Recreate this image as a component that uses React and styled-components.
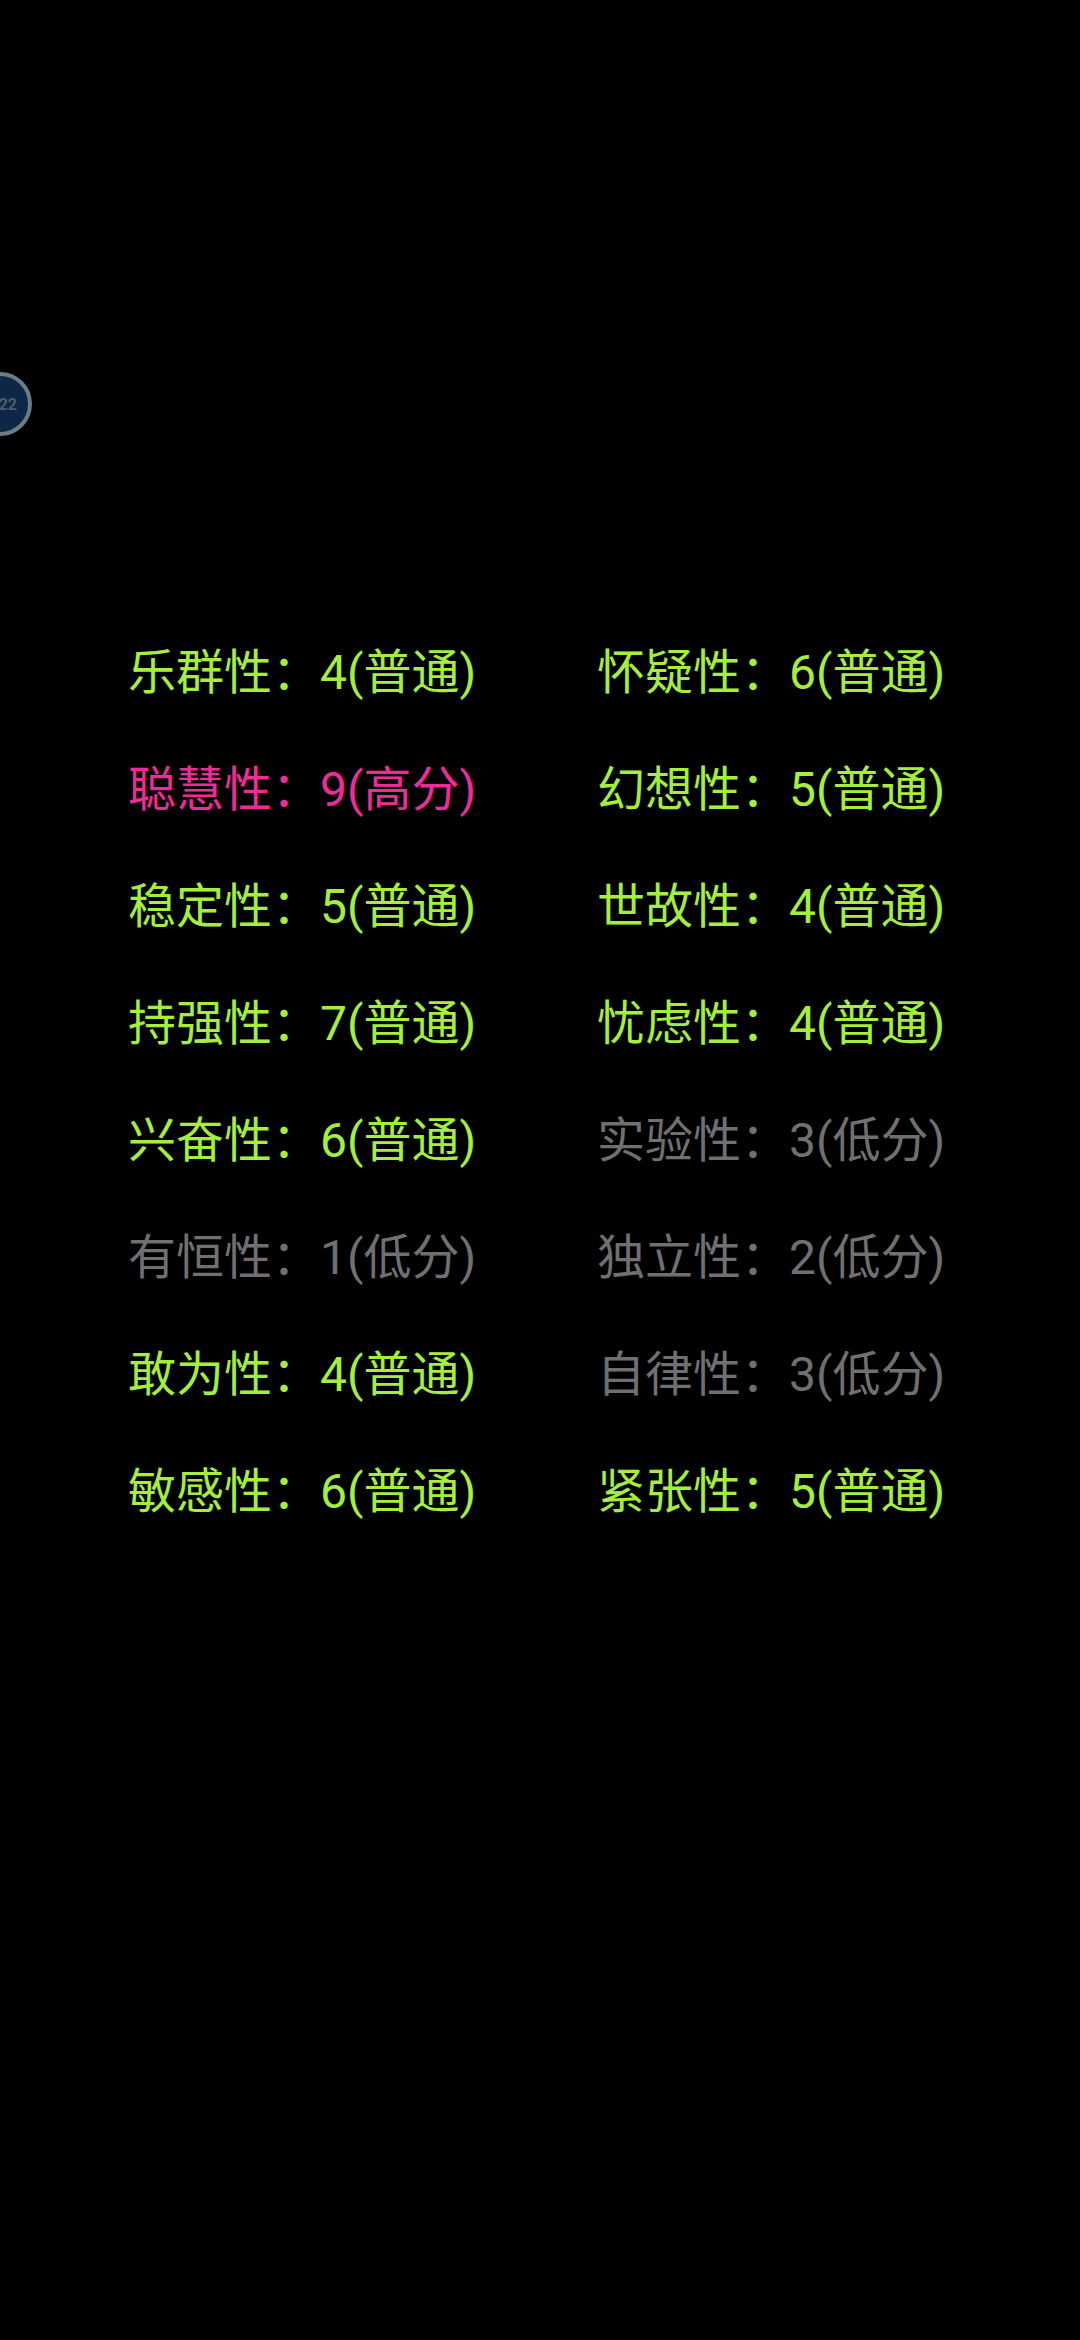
import React from 'react';
import styled, { createGlobalStyle } from 'styled-components';

const GlobalStyle = createGlobalStyle`
  html, body {
    margin: 0;
    padding: 0;
    background: #000;
  }
`;

const Screen = styled.div`
  position: relative;
  width: 1080px;
  height: 2340px;
  overflow: hidden;
  background: #000;
  font-family: Roboto, "Noto Sans CJK SC", sans-serif;
`;

const FloatBall = styled.div`
  position: absolute;
  left: -32px;
  top: 372px;
  width: 64px;
  height: 64px;
  box-sizing: border-box;
  border: 4px solid #6f7b82;
  border-radius: 50%;
  background: #0e2747;
  display: flex;
  align-items: center;
  justify-content: flex-end;
  padding-right: 11px;
  color: #4b5c70;
  font-size: 16px;
  font-weight: 700;
`;

const Grid = styled.div`
  display: grid;
  grid-template-columns: 469px 1fr;
  grid-auto-rows: 117px;
  padding: 609px 0 0 128px;
`;

const levelColor = {
  normal: '#a4ee3c',
  high: '#f02a98',
  low: '#707070',
};

const Trait = styled.div`
  display: flex;
  align-items: center;
  height: 117px;
  font-size: 48px;
  white-space: nowrap;
  color: ${(p) => levelColor[p.$level]};
`;

const traits = [
  ['乐群性', '4(普通)', 'normal'], ['怀疑性', '6(普通)', 'normal'],
  ['聪慧性', '9(高分)', 'high'], ['幻想性', '5(普通)', 'normal'],
  ['稳定性', '5(普通)', 'normal'], ['世故性', '4(普通)', 'normal'],
  ['持强性', '7(普通)', 'normal'], ['忧虑性', '4(普通)', 'normal'],
  ['兴奋性', '6(普通)', 'normal'], ['实验性', '3(低分)', 'low'],
  ['有恒性', '1(低分)', 'low'], ['独立性', '2(低分)', 'low'],
  ['敢为性', '4(普通)', 'normal'], ['自律性', '3(低分)', 'low'],
  ['敏感性', '6(普通)', 'normal'], ['紧张性', '5(普通)', 'normal'],
];

export default function App() {
  return (
    <Screen>
      <GlobalStyle />
      <FloatBall>22</FloatBall>
      <Grid>
        {traits.map(([name, score, level]) => (
          <Trait key={name} $level={level}>{name}：{score}</Trait>
        ))}
      </Grid>
    </Screen>
  );
}
